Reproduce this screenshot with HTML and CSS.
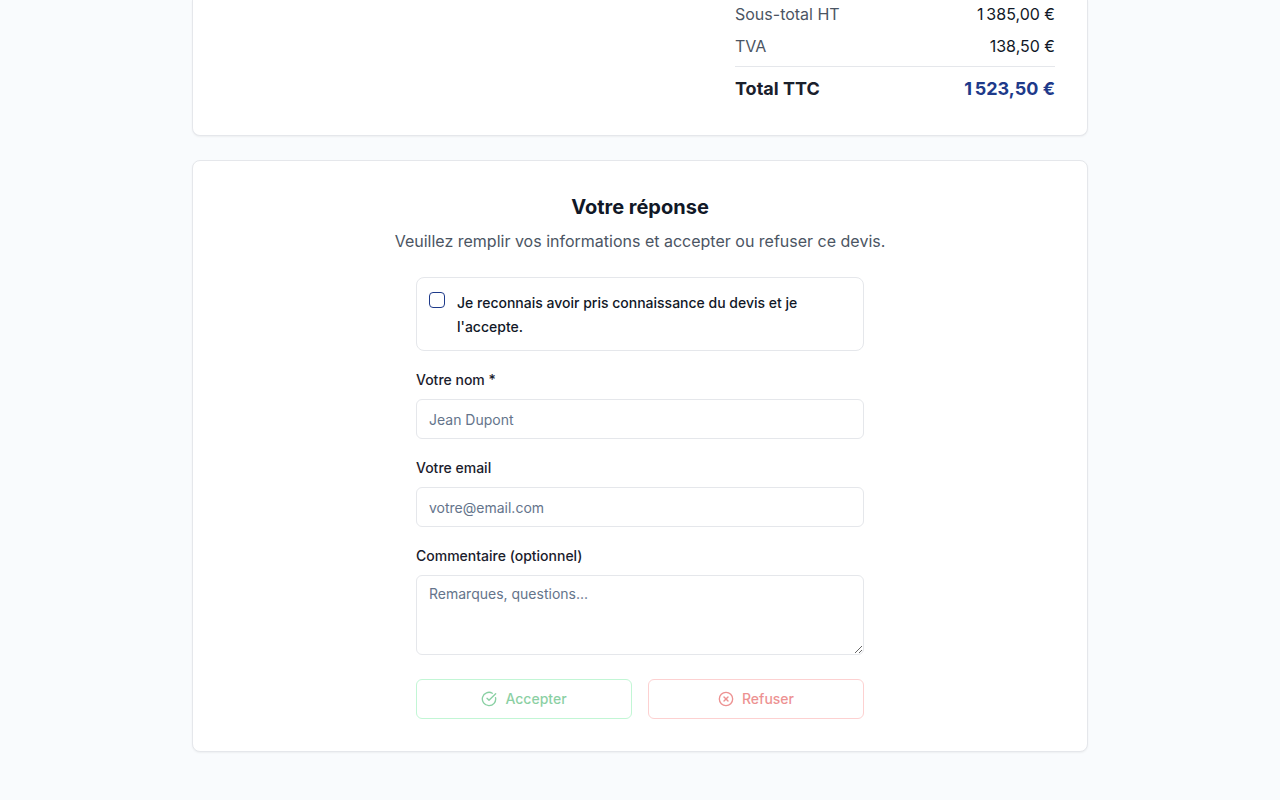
FILE: index.html
```
<!DOCTYPE html>
<html lang="fr">
<head>
<meta charset="UTF-8" />
<meta name="viewport" content="width=device-width, initial-scale=1.0"/>
<title>Devis</title>
<link rel="stylesheet" href="styles.css">
</head>
<body>

<main class="container">
  <section class="card card-summary">
    <dl class="totals">
      <div class="total-row">
        <dt>Sous-total HT</dt>
        <dd>1&#8239;385,00&nbsp;€</dd>
      </div>
      <div class="total-row">
        <dt>TVA</dt>
        <dd>138,50&nbsp;€</dd>
      </div>
      <div class="total-row total-final">
        <dt>Total TTC</dt>
        <dd>1&#8239;523,50&nbsp;€</dd>
      </div>
    </dl>
  </section>

  <section class="card">
    <h2>Votre réponse</h2>
    <p class="intro">Veuillez remplir vos informations et accepter ou refuser ce devis.</p>

    <form class="response-form">
      <div class="consent">
        <input type="checkbox" id="consent"/>
        <div>
          <label for="consent">Je reconnais avoir pris connaissance du devis et je l'accepte.</label>
        </div>
      </div>

      <div class="field">
        <label for="name">Votre nom *</label>
        <input type="text" id="name" placeholder="Jean Dupont"/>
      </div>

      <div class="field">
        <label for="email">Votre email</label>
        <input type="email" id="email" placeholder="votre@email.com"/>
      </div>

      <div class="field">
        <label for="comment">Commentaire (optionnel)</label>
        <textarea id="comment" placeholder="Remarques, questions..."></textarea>
      </div>

      <div class="actions">
        <button type="button" class="btn btn-accept" disabled>
          <svg viewBox="0 0 24 24" aria-hidden="true">
            <path d="M21.801 10A10 10 0 1 1 17 3.335"/>
            <path d="m9 11 3 3L22 4"/>
          </svg>
          Accepter
        </button>
        <button type="button" class="btn btn-refuse" disabled>
          <svg viewBox="0 0 24 24" aria-hidden="true">
            <circle cx="12" cy="12" r="10"/>
            <path d="m15 9-6 6"/>
            <path d="m9 9 6 6"/>
          </svg>
          Refuser
        </button>
      </div>
    </form>
  </section>
</main>

</body>
</html>
```
FILE: styles.css
```
* {
  box-sizing: border-box;
}

body {
  margin: 0;
  background: #f9fbfd;
  color: #111827;
  font-family: Inter, sans-serif;
  font-size: 16px;
  line-height: 24px;
}

.container {
  display: flex;
  flex-direction: column;
  gap: 24px;
  max-width: 896px;
  margin: 0 auto;
  padding-bottom: 48px;
}

.card {
  padding: 32px;
  background: #fff;
  border: 1px solid #e5e7eb;
  border-radius: 8px;
  box-shadow: 0 1px 2px rgba(0, 0, 0, 0.05);
}

.card-summary {
  padding-top: 2px;
  border-top: 0;
  border-radius: 0 0 8px 8px;
}

.totals {
  display: flex;
  flex-direction: column;
  gap: 8px;
  max-width: 320px;
  margin: 0 0 0 auto;
}

.total-row {
  display: flex;
  justify-content: space-between;
}

.total-row dt {
  color: #4b5563;
}

.total-row dd {
  margin: 0;
}

.total-final {
  padding-top: 8px;
  border-top: 1px solid #e5e7eb;
  font-size: 18px;
  font-weight: 700;
  line-height: 28px;
}

.total-final dt {
  color: #1a202c;
}

.total-final dd {
  color: #1e3a8a;
}

h2 {
  margin: 0 0 8px;
  font-size: 20px;
  font-weight: 700;
  line-height: 28px;
  text-align: center;
}

.intro {
  margin: 0 0 24px;
  color: #4b5563;
  text-align: center;
}

.response-form {
  display: flex;
  flex-direction: column;
  gap: 16px;
  max-width: 448px;
  margin: 0 auto;
}

.response-form label {
  font-size: 14px;
  font-weight: 500;
  line-height: 20px;
}

.consent {
  display: flex;
  align-items: flex-start;
  gap: 12px;
  padding: 12px;
  border: 1px solid #e5e7eb;
  border-radius: 8px;
}

.consent input {
  appearance: none;
  flex-shrink: 0;
  width: 16px;
  height: 16px;
  margin: 2px 0 0;
  border: 1px solid #1e3a8a;
  border-radius: 4px;
}

.consent input:checked {
  background: #1e3a8a;
}

.field label {
  color: #1a202c;
}

.field input,
.field textarea {
  display: block;
  width: 100%;
  margin: 8px 0 0;
  padding: 8px 12px;
  background: #fff;
  border: 1px solid #e5e7eb;
  border-radius: 6px;
  color: inherit;
  font-family: inherit;
  font-size: 14px;
  line-height: 20px;
}

.field input {
  height: 40px;
}

.field textarea {
  min-height: 80px;
  resize: vertical;
}

.field input::placeholder,
.field textarea::placeholder {
  color: #64748b;
}

.actions {
  display: flex;
  gap: 16px;
  padding-top: 8px;
}

.btn {
  display: flex;
  flex: 1;
  align-items: center;
  justify-content: center;
  gap: 8px;
  height: 40px;
  padding: 8px 16px;
  background: #fff;
  border: 1px solid;
  border-radius: 6px;
  font-family: inherit;
  font-size: 14px;
  font-weight: 500;
  line-height: 20px;
  cursor: pointer;
}

.btn:disabled {
  opacity: 0.5;
  cursor: default;
}

.btn svg {
  width: 16px;
  height: 16px;
  fill: none;
  stroke: currentColor;
  stroke-width: 2;
  stroke-linecap: round;
  stroke-linejoin: round;
}

.btn-accept {
  border-color: #86efac;
  color: #16a34a;
}

.btn-refuse {
  border-color: #fca5a5;
  color: #dc2626;
}
```
